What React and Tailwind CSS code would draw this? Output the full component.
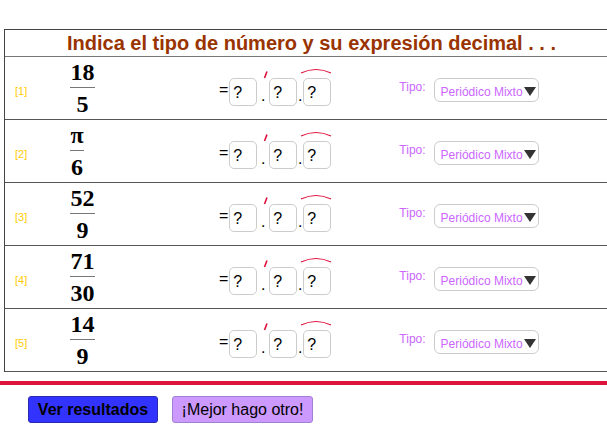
import React from 'react';

const rows = [
  { n: 1, num: '18', den: '5' },
  { n: 2, num: 'π', den: '6' },
  { n: 3, num: '52', den: '9' },
  { n: 4, num: '71', den: '30' },
  { n: 5, num: '14', den: '9' },
];

const Box = () => (
  <div className="w-[28px] h-[28px] rounded-[5px] border border-[#cccccc] bg-white pl-[3px] text-[16px] leading-[28px] text-black">?</div>
);

const Dot = () => <span className="text-[16px] leading-none text-black pb-[2px]">.</span>;

const Row = ({ n, num, den }) => (
  <div className="flex items-center h-[63px] border-b border-[#555]">
    <div className="w-[65px] pl-[10px] pt-[7px] text-[11px] text-[#ffcc00]">[{n}]</div>
    <div className="w-[149px] flex">
      <div className="flex flex-col items-stretch font-['Liberation_Serif',serif] font-bold text-[24px] leading-[26px] text-black">
        <span className="text-center px-[0.5px] pb-[2px] border-b border-[#777]">{num}</span>
        <span className="text-center pt-[3px]">{den}</span>
      </div>
    </div>
    <div className="flex items-end pt-[7px]">
      <span className="text-[16px] leading-none pb-[8px] mr-[1px]">=</span>
      <Box />
      <div className="relative w-[12px] flex justify-center">
        <svg className="absolute bottom-[27px] left-[6px]" width="5" height="8" viewBox="0 0 5 8">
          <path d="M4 0.5 L1.5 7" stroke="#e0103c" strokeWidth="1.6" fill="none" />
        </svg>
        <Dot />
      </div>
      <Box />
      <div className="w-[6px] flex justify-center">
        <Dot />
      </div>
      <div className="relative">
        <svg className="absolute -top-[11px] -left-[3px]" width="32" height="8" viewBox="0 0 32 8">
          <path d="M1 6 Q16 -1 31 6" stroke="#e0103c" strokeWidth="1.2" fill="none" />
        </svg>
        <Box />
      </div>
    </div>
    <div className="ml-[68px] text-[12px] text-[#cc66ff] pb-[2px]">Tipo:</div>
    <div className="ml-[8px] mt-[4px] w-[105px] h-[24px] rounded-[6px] border border-[#cccccc] flex items-center pl-[6px] text-[12px] text-[#cc66ff]">
      <span className="pt-[3px]">Periódico Mixto</span>
      <span className="ml-[1px] mt-[3px] w-0 h-0 border-l-[6px] border-r-[6px] border-t-[9px] border-l-transparent border-r-transparent border-t-[#333]" />
    </div>
  </div>
);

export default function App() {
  return (
    <div className="w-[607px] h-[437px] overflow-hidden bg-white pt-[29px] font-['Liberation_Sans',Arial,sans-serif]">
      <div className="ml-[4px] w-[614px] border-l border-t border-[#444]">
        <div className="h-[27px] flex items-center justify-center border-b border-[#777] text-[20px] font-bold text-[#993300]">
          Indica el tipo de número y su expresión decimal . . .
        </div>
        {rows.map(r => (
          <Row key={r.n} {...r} />
        ))}
      </div>
      <div className="mt-[9px] h-[4px] bg-[#dc143c]" />
      <div className="flex gap-[14px] pl-[28px] mt-[11px]">
        <button className="w-[130px] h-[27px] rounded-[3px] border border-[#2a2ab0] bg-[#3333ff] text-[16px] font-bold text-black">
          Ver resultados
        </button>
        <button className="w-[141px] h-[27px] rounded-[3px] border border-[#a080d0] bg-[#cc99ff] text-[16px] text-black">
          ¡Mejor hago otro!
        </button>
      </div>
    </div>
  );
}
